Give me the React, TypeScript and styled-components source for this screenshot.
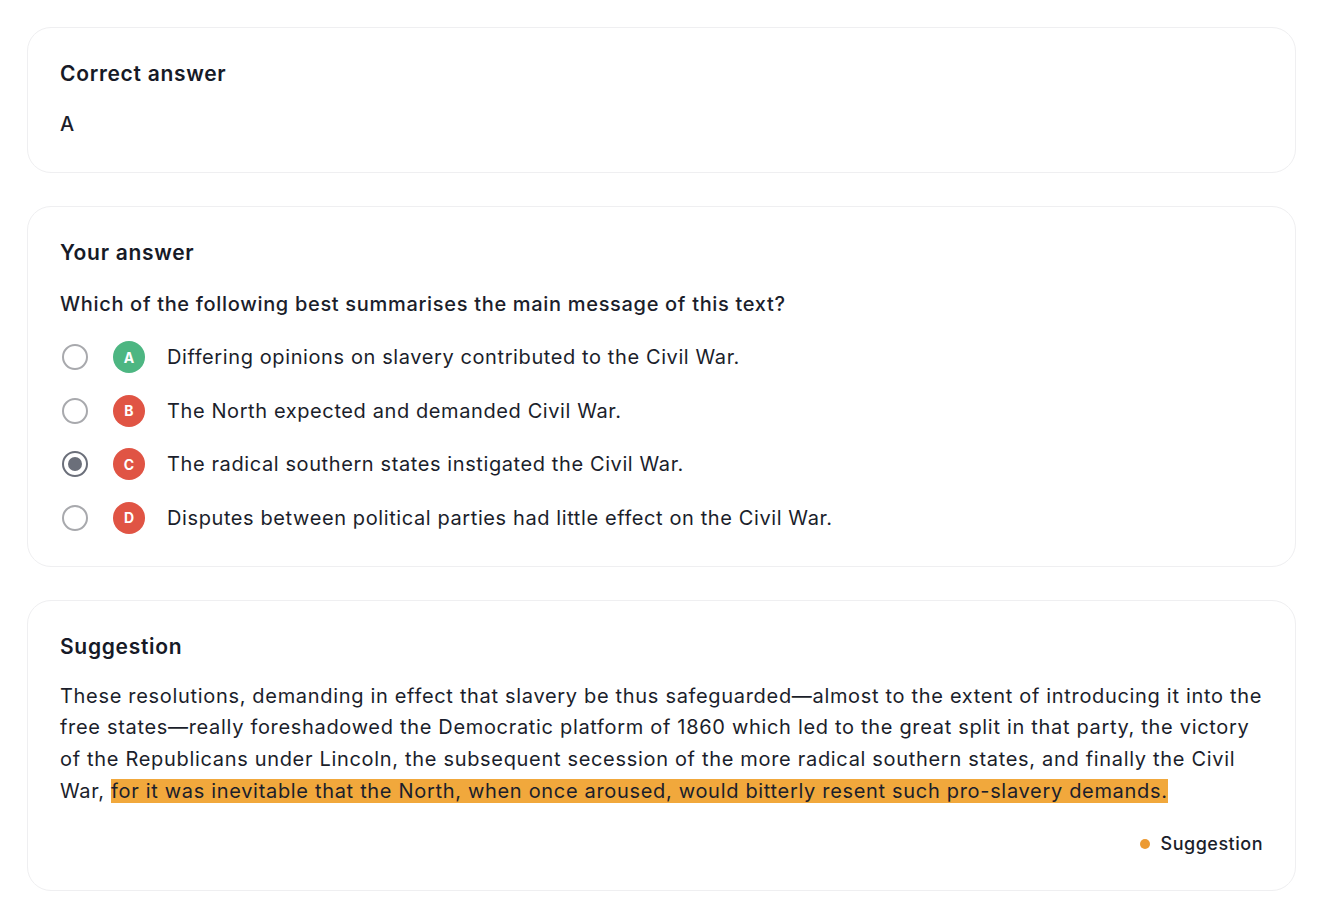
import * as React from 'react';
import styled, { createGlobalStyle } from 'styled-components';

const GlobalStyle = createGlobalStyle`
    body {
        margin: 0;
        background: #ffffff;
        font-family: Inter, "Noto Sans", sans-serif;
        color: #1b1e2b;
    }
`;

const Page = styled.div`
    display: flex;
    flex-direction: column;
    gap: 33px;
    padding: 27px 24px 18px 27px;
`;

const Card = styled.section`
    border: 1px solid #efeff1;
    border-radius: 24px;
    padding: 32px;
    display: flex;
    flex-direction: column;
`;

const Heading = styled.h2`
    margin: 0;
    font-size: 21px;
    line-height: 28px;
    font-weight: 600;
    letter-spacing: 0.7px;
    color: #161a27;
`;

const Body = styled.div`
    margin-top: 20px;
    font-size: 20px;
    line-height: 32px;
    font-weight: 500;
    letter-spacing: 0.6px;
`;

const Question = styled.div`
    margin-top: 21px;
    font-size: 20px;
    line-height: 32px;
    font-weight: 500;
    letter-spacing: 0.68px;
`;

const Options = styled.ul`
    list-style: none;
    margin: 21px 0 0 0;
    padding: 0;
    display: flex;
    flex-direction: column;
    gap: 21.5px;
`;

const Option = styled.li`
    display: flex;
    align-items: center;
    height: 32px;
    font-size: 20px;
    font-weight: 400;
    letter-spacing: 0.6px;
`;

const Radio = styled.span<{ $checked?: boolean }>`
    box-sizing: border-box;
    width: 26px;
    height: 26px;
    margin-left: 2px;
    border-radius: 50%;
    border: 2px solid ${p => (p.$checked ? '#6b6f7a' : '#a8a9ad')};
    display: flex;
    align-items: center;
    justify-content: center;
    &::after {
        content: '';
        display: ${p => (p.$checked ? 'block' : 'none')};
        width: 14px;
        height: 14px;
        border-radius: 50%;
        background: #6b6f7a;
    }
`;

const Badge = styled.span<{ $correct?: boolean }>`
    width: 32px;
    height: 32px;
    margin: 0 22px 0 25px;
    border-radius: 50%;
    background: ${p => (p.$correct ? '#4db682' : '#e05444')};
    color: #ffffff;
    font-size: 14px;
    font-weight: 700;
    letter-spacing: 0;
    display: flex;
    align-items: center;
    justify-content: center;
`;

const Passage = styled.p`
    margin: 20px 0 0 0;
    font-size: 20px;
    line-height: 31.7px;
    font-weight: 400;
    letter-spacing: 0.68px;
`;

const Highlight = styled.mark`
    background: #f1a83c;
    color: inherit;
`;

const Legend = styled.div`
    margin-top: 23px;
    align-self: flex-end;
    display: flex;
    align-items: center;
    gap: 11px;
    font-size: 18px;
    line-height: 28px;
    font-weight: 500;
    letter-spacing: 0.5px;
`;

const Dot = styled.span`
    width: 10px;
    height: 10px;
    border-radius: 50%;
    background: #ec9a32;
`;

const options = [
    { letter: 'A', text: 'Differing opinions on slavery contributed to the Civil War.' },
    { letter: 'B', text: 'The North expected and demanded Civil War.' },
    { letter: 'C', text: 'The radical southern states instigated the Civil War.' },
    { letter: 'D', text: 'Disputes between political parties had little effect on the Civil War.' },
];

const App: React.FC = () => {
    const correct = 'A';
    const chosen = 'C';
    return (
        <>
            <GlobalStyle />
            <Page>
                <Card>
                    <Heading>Correct answer</Heading>
                    <Body>{correct}</Body>
                </Card>
                <Card>
                    <Heading>Your answer</Heading>
                    <Question>Which of the following best summarises the main message of this text?</Question>
                    <Options>
                        {options.map(o => (
                            <Option key={o.letter}>
                                <Radio $checked={o.letter === chosen} />
                                <Badge $correct={o.letter === correct}>{o.letter}</Badge>
                                {o.text}
                            </Option>
                        ))}
                    </Options>
                </Card>
                <Card>
                    <Heading>Suggestion</Heading>
                    <Passage>
                        These resolutions, demanding in effect that slavery be thus safeguarded—almost to the extent of
                        introducing it into the free states—really foreshadowed the Democratic platform of 1860 which led
                        to the great split in that party, the victory of the Republicans under Lincoln, the subsequent
                        secession of the more radical southern states, and finally the Civil War,{' '}
                        <Highlight>for it was inevitable that the North, when once aroused, would bitterly resent such pro-slavery demands.</Highlight>
                    </Passage>
                    <Legend>
                        <Dot />
                        Suggestion
                    </Legend>
                </Card>
            </Page>
        </>
    );
};

export default App;
